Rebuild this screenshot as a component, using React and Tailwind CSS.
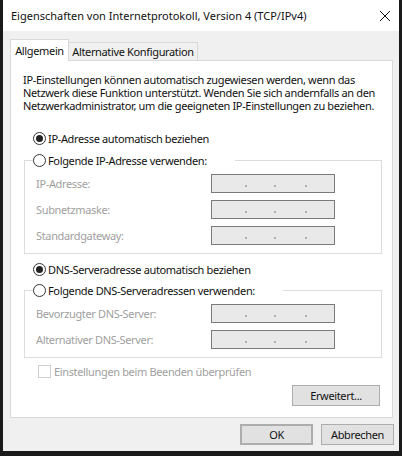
import React from "react";

const font = { fontFamily: '"Noto Sans", "Liberation Sans", sans-serif' };

const Radio = ({ checked }) => (
  <span className="w-[13px] h-[13px] rounded-full border border-[#333] bg-white flex items-center justify-center shrink-0">
    {checked && <span className="w-[7px] h-[7px] rounded-full bg-[#222]" />}
  </span>
);

const IpBox = () => (
  <div className="w-[124px] h-[19px] border border-[#7a7a7a] bg-[#e9e9e9] flex items-center tracking-normal">
    <span className="ml-[33px] w-[2px] h-[2px] mt-[5px] bg-[#b0b0b0]" />
    <span className="ml-[27px] w-[2px] h-[2px] mt-[5px] bg-[#b0b0b0]" />
    <span className="ml-[29px] w-[2px] h-[2px] mt-[5px] bg-[#b0b0b0]" />
  </div>
);

const Row = ({ label }) => (
  <div className="flex items-center h-[19px]">
    <span className="w-[186px] pl-[11px] text-[#a0a0a0]">{label}</span>
    <IpBox />
  </div>
);

const Group = ({ legend, rows }) => (
  <fieldset className="w-[358px] ml-[13px] border border-[#dcdcdc] px-0 pb-[8px]">
    <legend className="ml-[8px] flex items-center gap-[2px] h-[16px] pr-[28px]">
      <Radio />
      <span>{legend}</span>
    </legend>
    <div className="flex flex-col gap-[7px] pt-[6px]">
      {rows.map((r) => (
        <Row key={r} label={r} />
      ))}
    </div>
  </fieldset>
);

const Button = ({ children, className = "" }) => (
  <button className={`h-[21px] bg-[#e1e1e1] border border-[#adadad] flex items-center justify-center text-[#111] ${className}`}>
    {children}
  </button>
);

export default function App() {
  return (
    <div className="w-[402px] h-[456px] bg-[#1a1a1a] overflow-hidden text-[11px] leading-[13px] tracking-[-0.35px] text-[#111] whitespace-nowrap" style={font}>
      <div className="ml-[3px] w-[396px] h-[451px] bg-[#f0f0f0] flex flex-col">
        <div className="h-[31px] bg-white flex items-center justify-between pl-[8px] pr-[8px]">
          <span className="text-[11px] tracking-normal">Eigenschaften von Internetprotokoll, Version 4 (TCP/IPv4)</span>
          <svg width="12" height="12" viewBox="0 0 12 12">
            <path d="M1 1L11 11M11 1L1 11" stroke="#111" strokeWidth="1" />
          </svg>
        </div>

        <div className="flex items-end h-[29px] pl-[7px]">
          <div className="h-[22px] w-[59px] bg-white border border-b-0 border-[#d9d9d9] flex items-center justify-center relative z-10 -mb-px">
            Allgemein
          </div>
          <div className="h-[18px] w-[129px] bg-[#f0f0f0] border border-b-0 border-l-0 border-[#d9d9d9] flex items-center justify-center">
            Alternative Konfiguration
          </div>
        </div>

        <div className="ml-[7px] w-[383px] h-[358px] bg-white border border-[#d9d9d9] flex flex-col">
          <p className="pl-[12px] pt-[12px] text-[#111]">
            IP-Einstellungen können automatisch zugewiesen werden, wenn das
            <br />
            Netzwerk diese Funktion unterstützt. Wenden Sie sich andernfalls an den
            <br />
            Netzwerkadministrator, um die geeigneten IP-Einstellungen zu beziehen.
          </p>

          <div className="flex items-center gap-[2px] pl-[22px] mt-[18px] h-[16px]">
            <Radio checked />
            <span>IP-Adresse automatisch beziehen</span>
          </div>

          <div className="mt-[6px]">
            <Group
              legend="Folgende IP-Adresse verwenden:"
              rows={["IP-Adresse:", "Subnetzmaske:", "Standardgateway:"]}
            />
          </div>

          <div className="flex items-center gap-[2px] pl-[22px] mt-[7px] h-[16px]">
            <Radio checked />
            <span>DNS-Serveradresse automatisch beziehen</span>
          </div>

          <div className="mt-[5px]">
            <Group
              legend="Folgende DNS-Serveradressen verwenden:"
              rows={["Bevorzugter DNS-Server:", "Alternativer DNS-Server:"]}
            />
          </div>

          <div className="flex items-center gap-[3px] pl-[27px] mt-[6px] h-[14px] text-[#a0a0a0]">
            <span className="w-[13px] h-[13px] border border-[#cfcfcf] bg-white shrink-0" />
            <span>Einstellungen beim Beenden überprüfen</span>
          </div>

          <div className="flex justify-end pr-[12px] mt-[7px]">
            <Button className="w-[88px]">Erweitert...</Button>
          </div>
        </div>

        <div className="flex justify-end gap-[8px] pr-[5px] mt-[6px]">
          <Button className="w-[73px] border-[#0078d7] border-2">OK</Button>
          <Button className="w-[73px]">Abbrechen</Button>
        </div>
      </div>
    </div>
  );
}
